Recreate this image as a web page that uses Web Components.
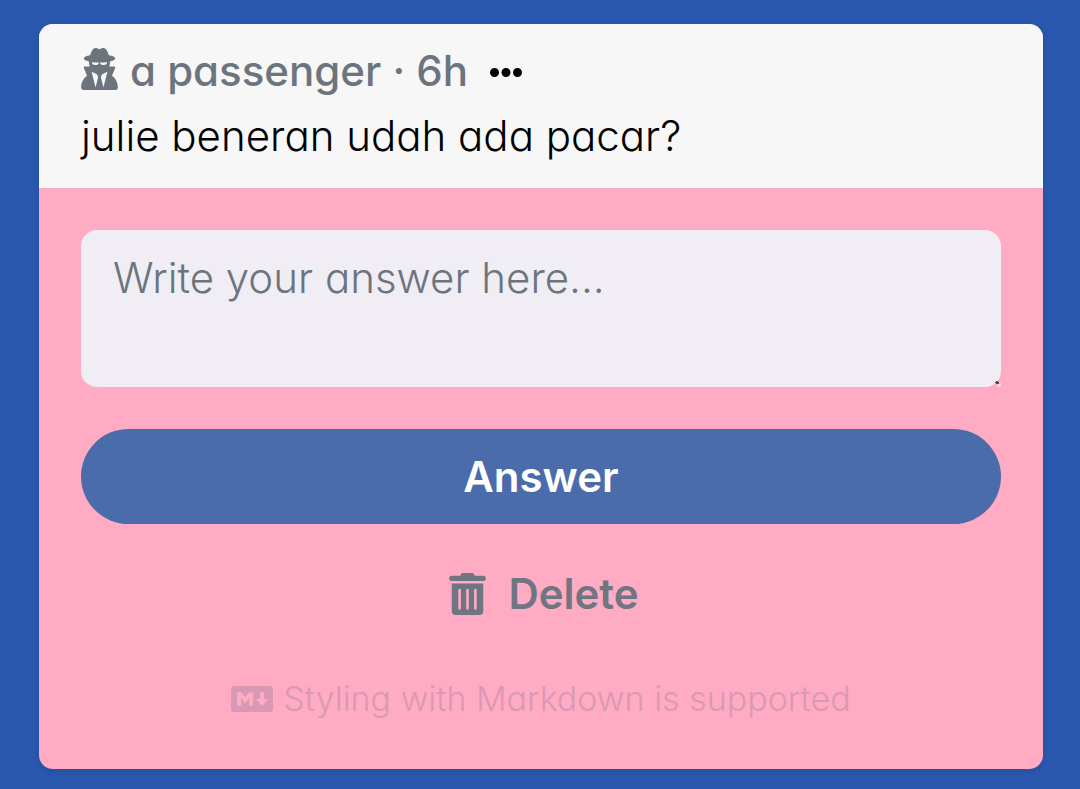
<!DOCTYPE html>
<html lang="id">
<head>
<meta charset="utf-8">
<meta name="viewport" content="width=device-width, initial-scale=1">
<title>Inbox</title>
<style>
  body {
    background: #2a58af;
    color: #000;
    font-family: Inter, Lato, "Liberation Sans", sans-serif;
    font-feature-settings: "cv11", "ss03";
    font-size: 42px;
    font-weight: 300;
    line-height: 64px;
    margin: 0;
    padding: 24px 37px 20px 39px;
  }
</style>
</head>
<body>
<inbox-card>
  <question-header slot="header" author="a passenger" time="6h">julie beneran udah ada pacar?</question-header>
  <answer-form></answer-form>
</inbox-card>

<script>
const icons = {
  secret: ["0 0 448 512", "M224 16c-6.7 0-10.8-2.8-15.5-6.1C201.9 5.4 194 0 176 0c-30.5 0-52 43.7-66 89.4C62.7 98.1 32 112.2 32 128c0 14.3 25 27.1 64.6 35.9c-.4 4-.6 8-.6 12.1c0 17 3.3 33.2 9.3 48H45.4C38 224 32 230 32 237.4c0 1.7 .3 3.4 1 5l38.8 96.9C28.2 371.8 0 423.8 0 482.3C0 498.7 13.3 512 29.7 512H418.3c16.4 0 29.7-13.3 29.7-29.7c0-58.5-28.2-110.4-71.7-143L415 242.4c.6-1.6 1-3.3 1-5c0-7.4-6-13.4-13.4-13.4H342.7c6-14.8 9.3-31 9.3-48c0-4.1-.2-8.1-.6-12.1C391 155.1 416 142.3 416 128c0-15.8-30.7-29.9-78-38.6C324 43.7 302.5 0 272 0c-18 0-25.9 5.4-32.5 9.9c-4.8 3.3-8.8 6.1-15.5 6.1zM280 208H267.6c-16.5 0-31.1-10.6-36.3-26.2c-2.3-7-12.2-7-14.5 0c-5.2 15.6-19.9 26.2-36.3 26.2H168c-22.1 0-40-17.9-40-40V169.6c28.2 4.1 61 6.4 96 6.4s67.8-2.3 96-6.4V168c0 22.1-17.9 40-40 40zM192 320l16 32L176 480 128 288zM320 288L272 480 240 352l16-32z"],
  dots: ["0 0 512 512", "M328 264a72 72 0 1 1-144 0 72 72 0 1 1 144 0zM512 264a72 72 0 1 1-144 0 72 72 0 1 1 144 0zM144 264a72 72 0 1 1-144 0 72 72 0 1 1 144 0z"],
  trash: ["0 0 448 512", "M32 464a48 48 0 0 0 48 48h288a48 48 0 0 0 48-48V128H32zm272-256a16 16 0 0 1 32 0v224a16 16 0 0 1-32 0zm-96 0a16 16 0 0 1 32 0v224a16 16 0 0 1-32 0zm-96 0a16 16 0 0 1 32 0v224a16 16 0 0 1-32 0zM432 32H312l-9.4-18.7A24 24 0 0 0 281.1 0H166.8a23.72 23.72 0 0 0-21.4 13.3L136 32H32a32 32 0 0 0 0 64h384a32 32 0 0 0 0-64z"],
  markdown: ["0 59 640 394", "M593.8 59.1H46.2C20.7 59.1 0 79.8 0 105.2v301.5c0 25.5 20.7 46.2 46.2 46.2h547.7c25.5 0 46.2-20.7 46.1-46.1V105.2c0-25.4-20.7-46.1-46.2-46.1zM338.5 360.6H277v-120l-61.5 76.9-61.5-76.9v120H92.3V151.4h61.5l61.5 76.9 61.5-76.9h61.5v209.2zm135.3 3.1L381.5 256H443V151.4h61.5V256H566z"],
};

class FaIcon extends HTMLElement {
  connectedCallback() {
    const [viewBox, path] = icons[this.getAttribute("name")];
    this.attachShadow({ mode: "open" });
    this.shadowRoot.innerHTML = `
      <style>
        :host {
          display: block;
          flex: none;
          height: 42px;
          width: 37px;
        }

        svg {
          display: block;
          fill: currentColor;
          height: 100%;
          width: 100%;
        }
      </style>
      <svg viewBox="${viewBox}" aria-hidden="true"><path fill-rule="evenodd" d="${path}"/></svg>
    `;
  }
}

class InboxCard extends HTMLElement {
  connectedCallback() {
    this.attachShadow({ mode: "open" });
    this.shadowRoot.innerHTML = `
      <style>
        :host {
          background: #ffabc3;
          border-radius: 14px;
          box-shadow: 0 2px 6px rgba(0, 0, 0, 0.12);
          display: block;
          overflow: hidden;
        }
      </style>
      <slot name="header"></slot>
      <slot></slot>
    `;
  }
}

class QuestionHeader extends HTMLElement {
  connectedCallback() {
    this.attachShadow({ mode: "open" });
    this.shadowRoot.innerHTML = `
      <style>
        :host {
          background: #f7f7f7;
          display: block;
          padding: 16px 42px 20px;
        }

        .meta {
          align-items: center;
          color: #6c757d;
          display: flex;
          font-weight: 500;
          gap: 12px;
          line-height: 62px;
          padding-bottom: 2px;
        }

        .author {
          align-items: center;
          display: flex;
          gap: 12px;
        }

        .author fa-icon {
          padding-bottom: 4px;
        }

        button {
          background: none;
          border: 0;
          color: #000;
          margin-left: 10px;
          padding: 2px 0 0;
        }

        button fa-icon {
          height: 32px;
          width: 32px;
        }

        p {
          margin: 0;
        }
      </style>
      <div class="meta">
        <div class="author">
          <fa-icon name="secret"></fa-icon>
          <span>${this.getAttribute("author")} · ${this.getAttribute("time")}</span>
        </div>
        <button type="button" aria-label="More"><fa-icon name="dots"></fa-icon></button>
      </div>
      <p><slot></slot></p>
    `;
  }
}

class AnswerForm extends HTMLElement {
  connectedCallback() {
    this.attachShadow({ mode: "open" });
    this.shadowRoot.innerHTML = `
      <style>
        :host {
          display: block;
          padding: 42px 42px 38px;
        }

        form {
          display: flex;
          flex-direction: column;
        }

        .field {
          display: grid;
          margin-bottom: 42px;
          position: relative;
        }

        textarea {
          background: #f0edf4;
          border: 0;
          border-radius: 16px;
          box-sizing: border-box;
          color: #000;
          font: inherit;
          font-feature-settings: inherit;
          height: 157px;
          outline: 0;
          padding: 16px 32px;
          resize: none;
          width: 100%;
        }

        textarea::placeholder {
          color: #6c757d;
          opacity: 1;
        }

        /* resize grip, sits over the corner of the text box */
        .grip {
          bottom: 0;
          height: 6px;
          position: absolute;
          right: 0;
          width: 6px;
        }

        button {
          align-items: center;
          border: 0;
          border-radius: 48px;
          display: flex;
          font: inherit;
          font-feature-settings: inherit;
          font-weight: 600;
          height: 95px;
          justify-content: center;
          padding: 0;
        }

        .answer {
          background: #4a6cab;
          color: #fff;
        }

        .delete {
          background: none;
          color: #707582;
          gap: 22px;
          margin: 22px 0 26px;
          padding-left: 6px;
        }

        .hint {
          align-items: center;
          color: #d999b4;
          display: flex;
          font-size: 34px;
          gap: 10px;
          justify-content: center;
          margin: 0;
        }

        .hint fa-icon {
          height: 26px;
          width: 42px;
        }
      </style>
      <form>
        <div class="field">
          <textarea aria-label="Answer" placeholder="Write your answer here..."></textarea>
          <svg class="grip" viewBox="0 0 6 6" aria-hidden="true">
            <path d="M3 3l3-1v2L4 6H2z" fill="#ffdbe5"/>
            <path d="M1 0h2v1h1v2H1V2H0V1h1z" fill="#5b4556"/>
          </svg>
        </div>
        <button class="answer" type="button">Answer</button>
        <button class="delete" type="button"><fa-icon name="trash"></fa-icon>Delete</button>
        <p class="hint"><fa-icon name="markdown"></fa-icon><span>Styling with Markdown is supported</span></p>
      </form>
    `;
  }
}

customElements.define("fa-icon", FaIcon);
customElements.define("inbox-card", InboxCard);
customElements.define("question-header", QuestionHeader);
customElements.define("answer-form", AnswerForm);
</script>
</body>
</html>
